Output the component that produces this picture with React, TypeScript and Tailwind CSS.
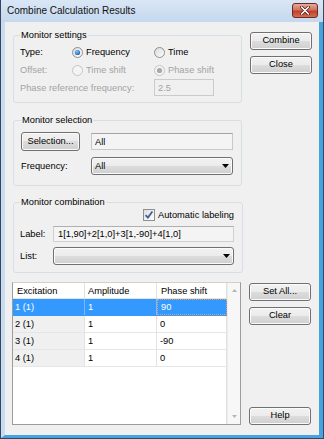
import React from "react";

const btn =
  "h-[18px] w-[62px] rounded-[3px] border border-[#707070] bg-[linear-gradient(to_bottom,#f2f2f2,#ebebeb_50%,#dddddd_50%,#cfcfcf)] shadow-[inset_0_0_0_1px_#fbfbfb] text-[9.3px] leading-none text-black flex items-center justify-center";

const Radio = ({ checked, disabled }: { checked?: boolean; disabled?: boolean }) => (
  <svg width="11" height="11" viewBox="0 0 11 11" className="shrink-0">
    <defs>
      <linearGradient id="rg" x1="0" y1="0" x2="1" y2="1">
        <stop offset="0" stopColor="#d8d8d8" />
        <stop offset="1" stopColor="#ffffff" />
      </linearGradient>
      <radialGradient id="dot" cx="0.4" cy="0.35" r="0.7">
        <stop offset="0" stopColor="#7cc6f6" />
        <stop offset="1" stopColor="#1a5eae" />
      </radialGradient>
    </defs>
    <circle cx="5.5" cy="5.5" r="5" fill={disabled ? "#f4f4f4" : "url(#rg)"} stroke={disabled ? "#c4c4c4" : "#8e8f8f"} />
    {checked && <circle cx="5.5" cy="5.5" r="2.6" fill={disabled ? "#a8a8a8" : "url(#dot)"} />}
  </svg>
);

const Arrow = () => (
  <svg width="7" height="4" viewBox="0 0 7 4" className="shrink-0">
    <path d="M0 0 H7 L3.5 4 Z" fill="#000" />
  </svg>
);

const Combo = ({ value, className }: { value?: string; className?: string }) => (
  <div
    className={
      "h-[18px] rounded-[3px] border border-[#707070] bg-[linear-gradient(to_bottom,#f2f2f2,#ebebeb_50%,#dddddd_50%,#cfcfcf)] shadow-[inset_0_0_0_1px_#fbfbfb] flex items-center pl-[3px] pr-[3px] " +
      (className ?? "")
    }
  >
    <span className="flex-1">{value}</span>
    <Arrow />
  </div>
);

const Group = ({ title, className, children }: { title: string; className?: string; children: React.ReactNode }) => (
  <fieldset className={"ml-[1px] border border-[#d5dfe5] rounded-[3px] px-[6px] " + (className ?? "")}>
    <legend className="px-[1px] leading-[12px]">{title}</legend>
    {children}
  </fieldset>
);

const rows = [
  { ex: "1 (1)", amp: "1", ph: "90", sel: true },
  { ex: "2 (1)", amp: "1", ph: "0" },
  { ex: "3 (1)", amp: "1", ph: "-90" },
  { ex: "4 (1)", amp: "1", ph: "0" },
];

export default function App() {
  return (
    <div className="w-[324px] h-[439px] flex flex-col border border-t-0 border-[#34475e] bg-[#c9dbef] text-[9.3px] leading-[12px] text-black font-['Liberation_Sans',Arial,sans-serif]">
      {/* title bar */}
      <div className="h-[22px] shrink-0 flex items-center pl-[6px] pr-[5px] bg-[linear-gradient(to_bottom,#d9e6f5,#c5d8ee)]">
        <span className="flex-1 text-[10px] text-[#111]">Combine Calculation Results</span>
        <div className="w-[26px] h-[15px] mt-[-2px] rounded-[3px] border border-[#6b2a22] bg-[linear-gradient(to_bottom,#e9a99d,#d0735f_45%,#c2402c_55%,#d86a50)] flex items-center justify-center">
          <svg width="10" height="9" viewBox="0 0 10 9">
            <path d="M1.5 1 L8.5 8 M8.5 1 L1.5 8" stroke="#4a1a14" strokeWidth="3" strokeLinecap="round" />
            <path d="M1.5 1 L8.5 8 M8.5 1 L1.5 8" stroke="#ffffff" strokeWidth="1.6" strokeLinecap="round" />
          </svg>
        </div>
      </div>

      {/* client */}
      <div className="flex-1 flex flex-col bg-[#f0f0f0] border-l-[4px] border-l-[#c9dbef] border-r-[4px] border-r-[#45a3e0] border-b-[3px] border-b-[#45a3e0] pl-[7px] pr-[7px] pt-[7px] pb-[10px]">
        <div className="flex gap-[8px]">
          <div className="w-[230px] flex flex-col">
            <Group title="Monitor settings" className="pt-[2px] pb-[6px]">
              <div className="grid grid-cols-[52px_82px_1fr]">
                <div className="h-[18px] flex items-center">Type:</div>
                <div className="h-[18px] flex items-center gap-[3px]">
                  <Radio checked />
                  <span>Frequency</span>
                </div>
                <div className="h-[18px] flex items-center gap-[3px]">
                  <Radio />
                  <span>Time</span>
                </div>
                <div className="h-[18px] flex items-center text-[#a3a3a3]">Offset:</div>
                <div className="h-[18px] flex items-center gap-[3px] text-[#a3a3a3]">
                  <Radio disabled />
                  <span>Time shift</span>
                </div>
                <div className="h-[18px] flex items-center gap-[3px] text-[#a3a3a3]">
                  <Radio checked disabled />
                  <span>Phase shift</span>
                </div>
                <div className="col-span-2 h-[17px] flex items-center text-[#a3a3a3]">Phase reference frequency:</div>
                <div className="h-[17px] w-[60px] border border-[#cbcbcb] bg-[#f0f0f0] text-[#a3a3a3] flex items-center pl-[3px]">2.5</div>
              </div>
            </Group>

            <Group title="Monitor selection" className="mt-[11px] pt-[6px] pb-[10px] pl-[7px] pr-[8px]">
              <div className="h-[19px] flex items-center justify-between">
                <button className={btn + " !h-[19px] !w-[59px]"}>Selection...</button>
                <div className="w-[142px] h-[17px] border border-[#c8c8c8] border-t-[#a5a5a5] bg-[#f4f4f4] flex items-center pl-[3px]">All</div>
              </div>
              <div className="mt-[6px] flex items-center justify-between">
                <span>Frequency:</span>
                <Combo value="All" className="w-[142px]" />
              </div>
            </Group>

            <Group title="Monitor combination" className="mt-[10px] pt-[0px] pb-[7px] pr-[8px]">
              <div className="h-[13px] flex items-center pl-[123px] gap-[3px] whitespace-nowrap">
                <svg width="12" height="12" viewBox="0 0 12 12" className="shrink-0">
                  <defs>
                    <linearGradient id="cb" x1="0" y1="0" x2="1" y2="1">
                      <stop offset="0" stopColor="#dcdcdc" />
                      <stop offset="1" stopColor="#ffffff" />
                    </linearGradient>
                  </defs>
                  <rect x="0.5" y="0.5" width="11" height="11" fill="url(#cb)" stroke="#8e8f8f" />
                  <path d="M2.6 6.2 L4.9 8.6 L9.4 2.6" fill="none" stroke="#3d5a9a" strokeWidth="1.7" />
                </svg>
                <span>Automatic labeling</span>
              </div>
              <div className="mt-[5px] flex items-center justify-between">
                <span>Label:</span>
                <div className="w-[181px] h-[16px] border border-[#d0d0d0] border-t-[#b0b0b0] bg-[#f4f4f4] flex items-center pl-[4px]">
                  1[1,90]+2[1,0]+3[1,-90]+4[1,0]
                </div>
              </div>
              <div className="mt-[5px] flex items-center justify-between">
                <span>List:</span>
                <Combo className="w-[181px]" />
              </div>
            </Group>
          </div>

          <div className="flex flex-col pt-[3px] gap-[6px]">
            <button className={btn + " border-[#3c7fb1] shadow-[inset_0_0_0_1px_#bfe3f7]"}>Combine</button>
            <button className={btn}>Close</button>
          </div>
        </div>

        <div className="flex-1 flex gap-[8px] mt-[9px]">
          {/* table */}
          <div className="w-[229px] flex border border-[#9c9c9c] border-t-[#d0d0d0] bg-white">
            <div className="w-[214px] flex flex-col">
              <div className="h-[16px] flex border-b border-[#e2e2e2]">
                <div className="w-[72px] border-r border-[#e2e2e2] pl-[4px] flex items-center">Excitation</div>
                <div className="w-[72px] border-r border-[#e2e2e2] pl-[3px] flex items-center">Amplitude</div>
                <div className="w-[70px] border-r border-[#e2e2e2] pl-[4px] flex items-center">Phase shift</div>
              </div>
              {rows.map((r) => (
                <div
                  key={r.ex}
                  className={
                    "h-[17px] flex border-b " +
                    (r.sel ? "bg-[#3399ff] text-white border-[#3399ff]" : "border-[#e6e6e6]")
                  }
                >
                  <div className={"w-[72px] border-r pl-[2px] flex items-center " + (r.sel ? "border-[#79b9ff]" : "bg-[#f0f0f0] border-[#e2e2e2]")}>
                    {r.ex}
                  </div>
                  <div className={"w-[72px] border-r pl-[3px] flex items-center " + (r.sel ? "border-[#79b9ff]" : "border-[#e2e2e2]")}>
                    {r.amp}
                  </div>
                  <div
                    className={
                      "w-[70px] pl-[3px] flex items-center " +
                      (r.sel ? "border border-dotted border-[#e8a060]" : "border-r border-[#e2e2e2]")
                    }
                  >
                    {r.ph}
                  </div>
                </div>
              ))}
              <div className="flex-1 border-r border-[#e2e2e2]" />
            </div>
            {/* scrollbar */}
            <div className="flex-1 flex flex-col items-center justify-between bg-[#f7f7f7] border-l border-[#ececec] pt-[6px] pb-[6px]">
              <svg width="5" height="3" viewBox="0 0 5 3">
                <path d="M0 3 H5 L2.5 0 Z" fill="#b4b4b4" />
              </svg>
              <svg width="5" height="3" viewBox="0 0 5 3">
                <path d="M0 0 H5 L2.5 3 Z" fill="#b4b4b4" />
              </svg>
            </div>
          </div>

          <div className="flex flex-col pt-[1px]">
            <button className={btn}>Set All...</button>
            <button className={btn + " mt-[6px]"}>Clear</button>
            <div className="flex-1" />
            <button className={btn}>Help</button>
          </div>
        </div>
      </div>
    </div>
  );
}
